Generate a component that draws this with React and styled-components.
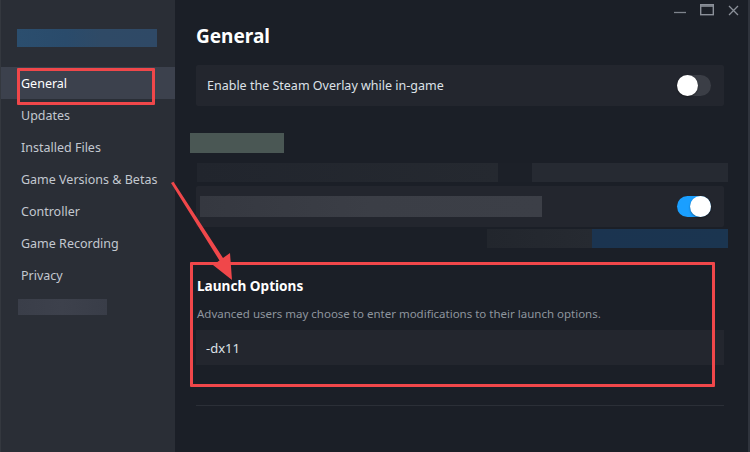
import React from "react";
import styled, { createGlobalStyle } from "styled-components";

const Global = createGlobalStyle`
  html, body { margin: 0; padding: 0; background: #1b1f27; }
  body { font-family: "Noto Sans", "Open Sans", Arial, sans-serif; -webkit-font-smoothing: antialiased; }
  * { box-sizing: border-box; }
`;

const Window = styled.div`
  position: relative;
  width: 750px;
  height: 452px;
  display: flex;
  background: #1b1f27;
  overflow: hidden;
`;

const Sidebar = styled.nav`
  width: 175px;
  flex: none;
  background: #2a2e36;
  border-left: 1px solid #34383f;
  padding-top: 29px;
  display: flex;
  flex-direction: column;
`;

const Blur = styled.div`
  width: ${(p) => p.w}px;
  height: ${(p) => p.h}px;
  margin-left: ${(p) => p.ml || 0}px;
  margin-top: ${(p) => p.mt || 0}px;
  background: ${(p) => p.bg};
  flex: none;
`;

const MenuItem = styled.div`
  height: 32px;
  display: flex;
  align-items: center;
  padding-left: 20px;
  font-size: 12.5px;
  color: ${(p) => (p.active ? "#ffffff" : "#c3c8d0")};
  background: ${(p) => (p.active ? "#3c414d" : "transparent")};
`;

const Main = styled.main`
  flex: 1;
  display: flex;
  flex-direction: column;
  padding: 22px 24px 0 21px;
  border-right: 2px solid #2f333c;
`;

const TitleBar = styled.div`
  position: absolute;
  top: 0;
  right: 11px;
  display: flex;
  gap: 14px;
  align-items: center;
  height: 20px;
`;

const Title = styled.h1`
  margin: 0 0 15px;
  height: 28px;
  line-height: 28px;
  font-size: 19px;
  font-weight: 700;
  color: #ffffff;
`;

const Row = styled.div`
  height: 41px;
  background: #23262e;
  border-radius: 2px;
  display: flex;
  align-items: center;
  justify-content: space-between;
  padding: 0 13px 0 11px;
  margin-top: ${(p) => p.mt || 0}px;
  font-size: 12.5px;
  color: #dde1e7;
`;

const Toggle = styled.div`
  width: 34px;
  height: 21px;
  border-radius: 11px;
  background: ${(p) => (p.on ? "#1a9fff" : "#3b3e46")};
  position: relative;
  flex: none;
  &::after {
    content: "";
    position: absolute;
    top: 0;
    ${(p) => (p.on ? "right: 0;" : "left: 0;")}
    width: 21px;
    height: 21px;
    border-radius: 50%;
    background: #ffffff;
    box-shadow: 0 1px 2px rgba(0,0,0,0.4);
  }
`;

const Strip = styled.div`
  height: 19px;
  margin-top: ${(p) => p.mt}px;
  margin-right: -4px;
  margin-left: ${(p) => p.ml}px;
  background: ${(p) => p.bg};
`;

const SectionTitle = styled.h2`
  margin: 29px 0 0 1px;
  font-size: 13.6px;
  line-height: 18px;
  font-weight: 700;
  color: #ffffff;
`;

const Desc = styled.p`
  margin: 12px 0 0 1px;
  font-size: 11.5px;
  line-height: 14px;
  color: #8e959e;
`;

const Input = styled.div`
  margin-top: 9px;
  height: 35px;
  background: #23262e;
  display: flex;
  align-items: center;
  padding-left: 10px;
  font-size: 13px;
  color: #dde1e7;
`;

const Separator = styled.div`
  margin-top: 40px;
  height: 1px;
  background: #2b2f37;
`;

const Highlight = styled.div`
  position: absolute;
  left: ${(p) => p.x}px;
  top: ${(p) => p.y}px;
  width: ${(p) => p.w}px;
  height: ${(p) => p.h}px;
  border: 3px solid #f0474a;
  border-radius: 1px;
  pointer-events: none;
`;

const ArrowSvg = styled.svg`
  position: absolute;
  left: 0;
  top: 0;
  pointer-events: none;
`;

const items = [
  "General",
  "Updates",
  "Installed Files",
  "Game Versions & Betas",
  "Controller",
  "Game Recording",
  "Privacy",
];

export default function App() {
  return (
    <>
      <Global />
      <Window>
        <Sidebar>
          <Blur
            w={140}
            h={18}
            ml={16}
            bg="linear-gradient(90deg,#2b4e6e 0%,#2a4b6b 35%,#2f4a66 60%,#2f4966 100%)"
          />
          <Blur w={1} h={20} bg="transparent" />
          {items.map((t, i) => (
            <MenuItem key={t} active={i === 0}>
              {t}
            </MenuItem>
          ))}
          <Blur
            w={89}
            h={16}
            ml={17}
            mt={8}
            bg="linear-gradient(90deg,#3a3e49 0%,#3d414c 50%,#393d48 100%)"
          />
        </Sidebar>
        <Main>
          <Title>General</Title>
          <Row>
            <span>Enable the Steam Overlay while in-game</span>
            <Toggle />
          </Row>
          <Blur w={94} h={20} ml={-6} mt={27} bg="#4a5754" />
          <Strip
            mt={10}
            ml={1}
            bg="linear-gradient(90deg,#21252d 0%,#252930 56.7%,#1c2028 56.7%,#1c2028 63%,#262a32 63%,#262a32 100%)"
          />
          <Row mt={4}>
            <Blur
              w={342}
              h={21}
              ml={-7}
              bg="linear-gradient(90deg,#353840 0%,#3b3e46 50%,#3c3f47 100%)"
            />
            <Toggle on />
          </Row>
          <Strip
            mt={2}
            ml={291}
            bg="linear-gradient(90deg,#22262d 0%,#262a31 43.6%,#1b3450 43.6%,#1b3550 100%)"
          />
          <SectionTitle>Launch Options</SectionTitle>
          <Desc>
            Advanced users may choose to enter modifications to their launch
            options.
          </Desc>
          <Input>-dx11</Input>
          <Separator />
        </Main>
        <TitleBar>
          <svg width="12" height="12" viewBox="0 0 12 12">
            <line x1="0" y1="8.5" x2="12" y2="8.5" stroke="#7f848d" strokeWidth="1.3" />
          </svg>
          <svg width="14" height="12" viewBox="0 0 14 12">
            <rect x="0.7" y="0.7" width="12.6" height="10" fill="none" stroke="#8b9099" strokeWidth="1.4" />
            <line x1="0.7" y1="2" x2="13.3" y2="2" stroke="#8b9099" strokeWidth="1.6" />
          </svg>
          <svg width="11" height="11" viewBox="0 0 11 11">
            <path d="M1 1 L10 10 M10 1 L1 10" stroke="#8b9099" strokeWidth="1.3" />
          </svg>
        </TitleBar>
        <Highlight x={17} y={68} w={138} h={37} />
        <Highlight x={190} y={262} w={525} h={125} />
        <ArrowSvg width="750" height="452" viewBox="0 0 750 452">
          <polygon
            points="171,183 173.5,181.8 223,258 230,253 232,280 213,265 219.5,260.5"
            fill="#f0474a"
          />
        </ArrowSvg>
      </Window>
    </>
  );
}
